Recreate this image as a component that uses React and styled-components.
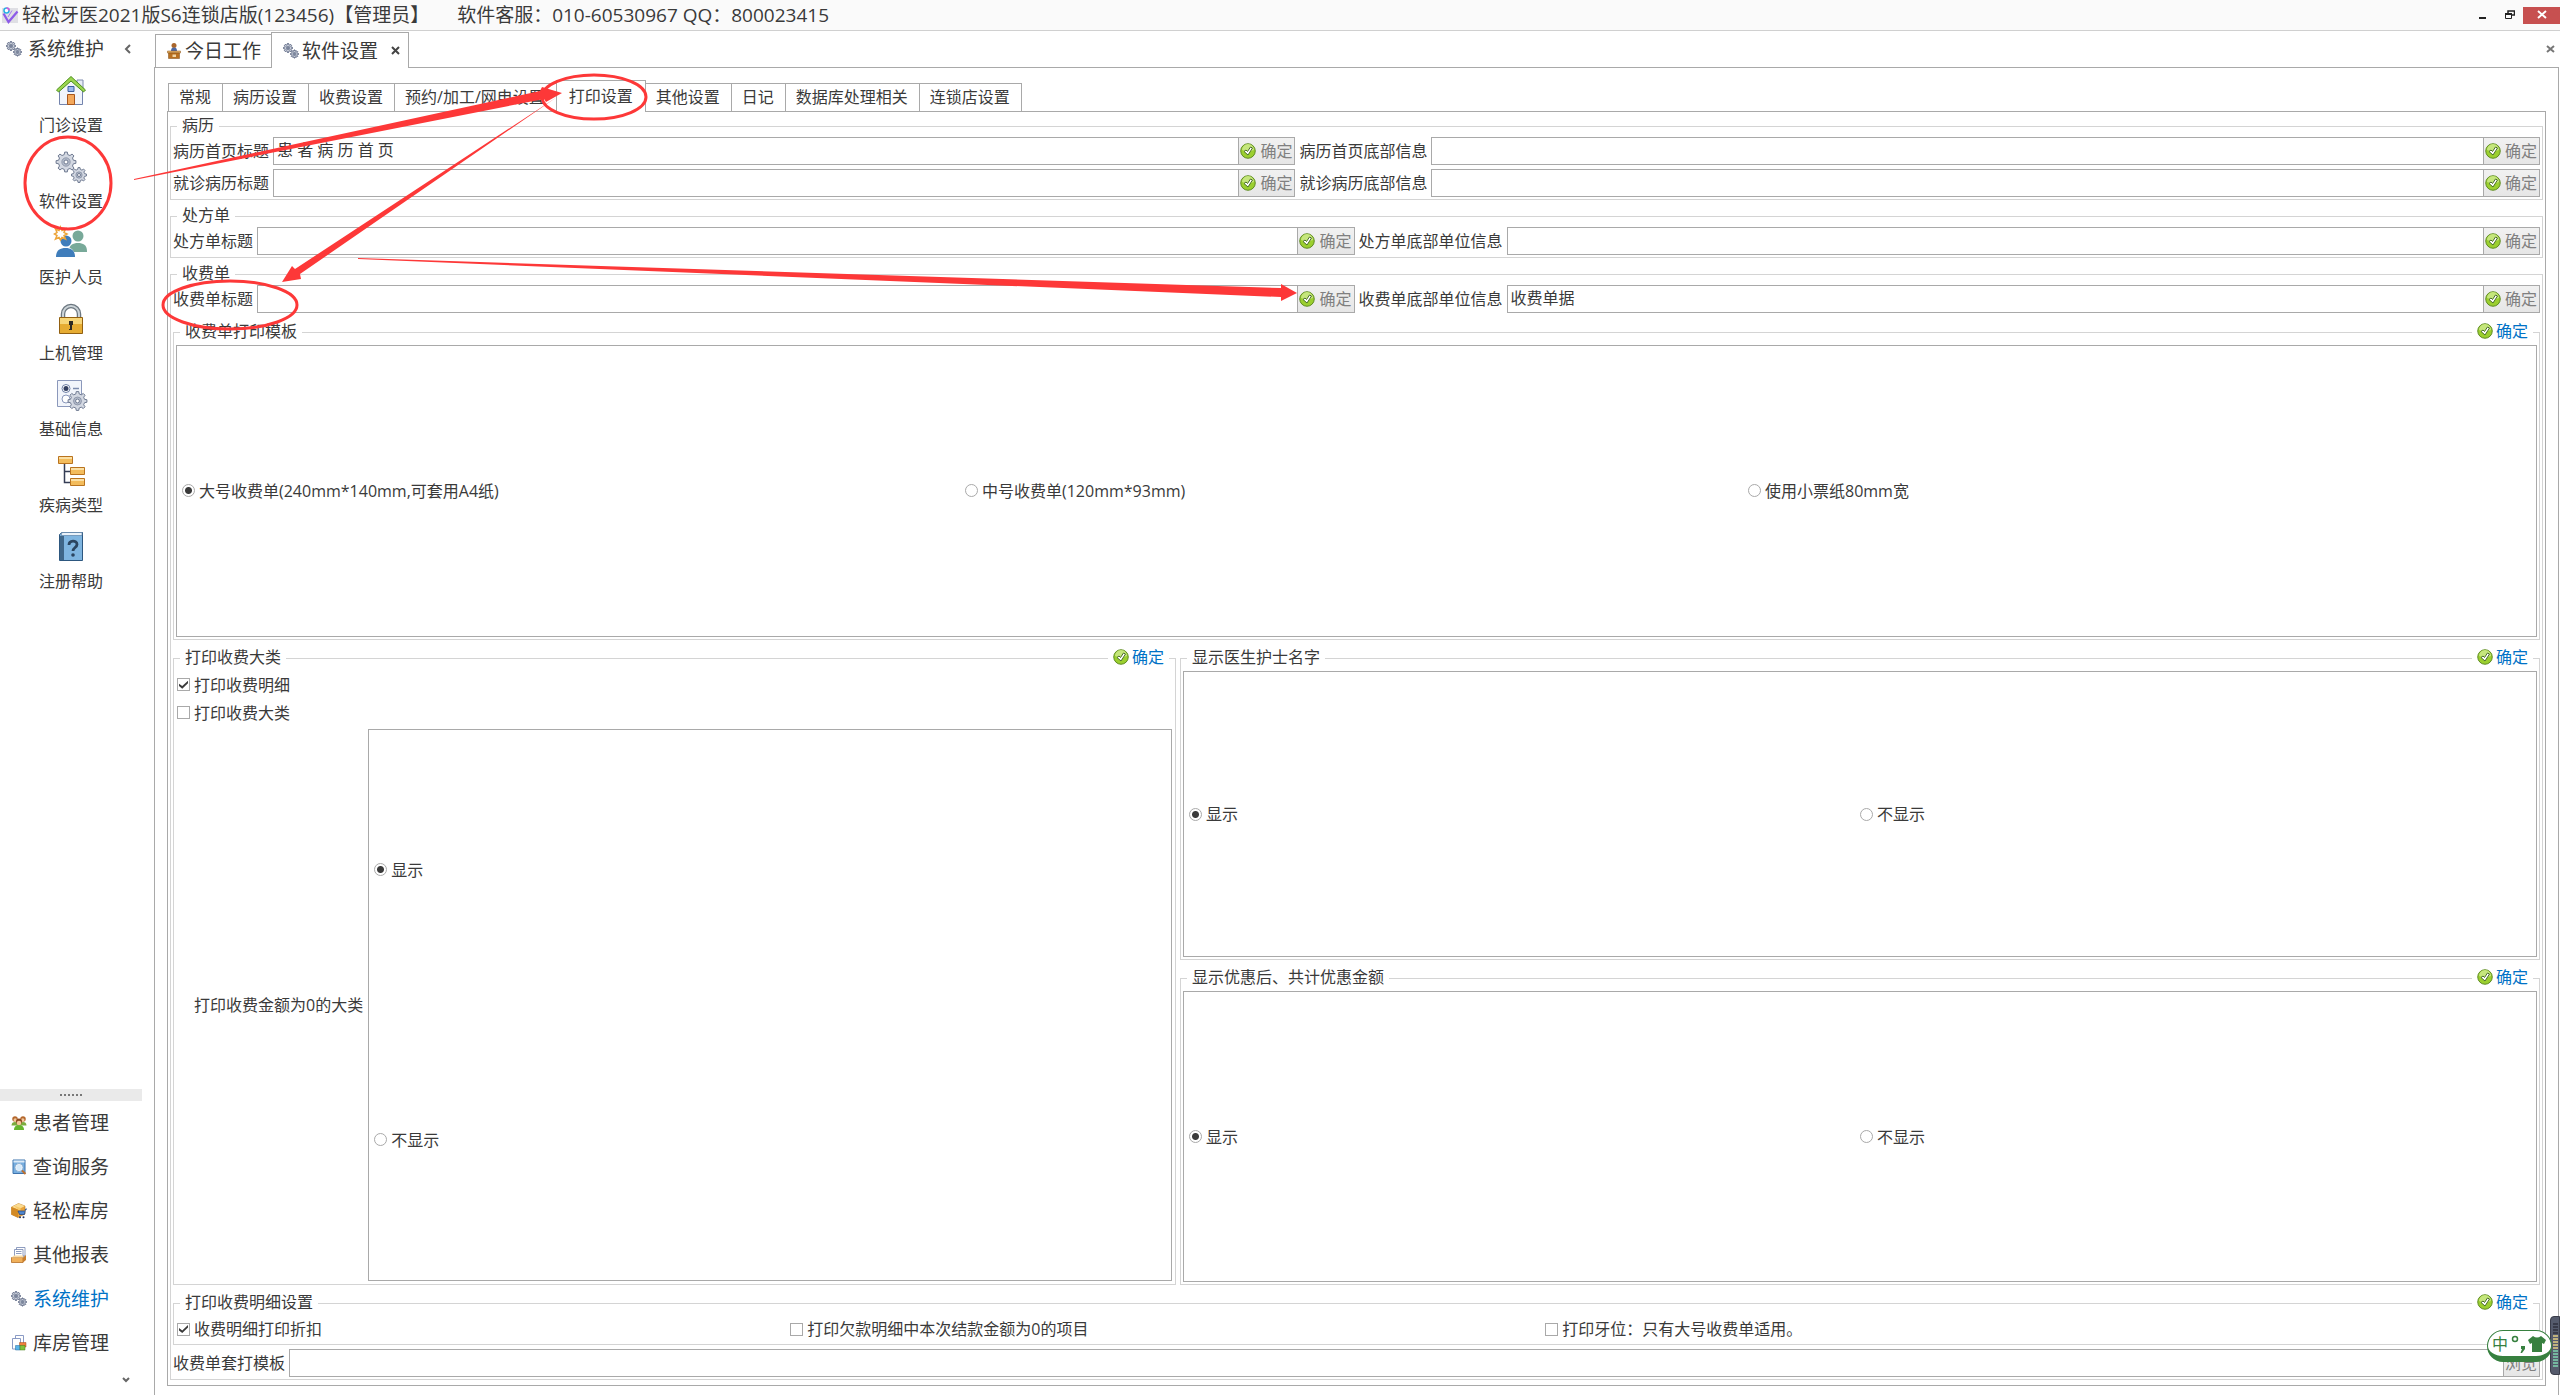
import React, { useState } from 'react';
import styled, { createGlobalStyle, css } from 'styled-components';

const LINE = '#a9a9a9';
const SOFT_LINE = '#d4d4d4';
const TEXT = '#3a3a3a';
const BLUE = '#0072c6';
const RED = '#fd3838';

const NAV_ITEMS = [
  { name: '门诊设置', icon: 'house' },
  { name: '软件设置', icon: 'gears' },
  { name: '医护人员', icon: 'people' },
  { name: '上机管理', icon: 'lock' },
  { name: '基础信息', icon: 'form' },
  { name: '疾病类型', icon: 'tree' },
  { name: '注册帮助', icon: 'book' },
];

const MODULES = [
  { name: '患者管理', icon: 'patients' },
  { name: '查询服务', icon: 'search' },
  { name: '轻松库房', icon: 'box' },
  { name: '其他报表', icon: 'report' },
  { name: '系统维护', icon: 'smallGears' },
  { name: '库房管理', icon: 'store' },
];

const SETTING_TABS = [
  '常规',
  '病历设置',
  '收费设置',
  '预约/加工/网电设置',
  '打印设置',
  '其他设置',
  '日记',
  '数据库处理相关',
  '连锁店设置',
];

const gearPath = (cx, cy, r, teeth = 8) => {
  const points = [];
  const step = (Math.PI * 2) / teeth;
  for (let i = 0; i < teeth; i++) {
    [
      [-0.3, 0.76],
      [-0.17, 1],
      [0.17, 1],
      [0.3, 0.76],
    ].forEach(([offset, scale]) => {
      const a = (i + offset) * step;
      points.push(
        `${(cx + Math.cos(a) * r * scale).toFixed(2)} ${(cy + Math.sin(a) * r * scale).toFixed(2)}`
      );
    });
  }
  return `M${points.join('L')}Z`;
};

const Gear = ({ cx, cy, r, stroke = '#707b92', width = 1 }) => (
  <g stroke={stroke} strokeWidth={width}>
    <path d={gearPath(cx, cy, r)} fill="#d3d8e2" />
    <circle cx={cx} cy={cy} r={r * 0.42} fill="#b4bccb" strokeWidth={width * 0.6} />
    <circle cx={cx} cy={cy} r={r * 0.2} fill="#fff" />
  </g>
);

const ICONS = {
  house: (
    <>
      <path d="M22 5h6v12h-6z" fill="#e8ecf5" stroke="#7e8cae" />
      <path d="M4.500 15 16 4l11.500 11v14.500h-23z" fill="#f1f4fb" stroke="#7384ad" />
      <path d="M1.500 15 16 1.500 30.500 15l-2 2L16 6 3.500 17z" fill="#9bd650" stroke="#4c8f1c" />
      <path d="M13 11.500h6v5h-6z" fill="#9ab9ee" stroke="#3d5f9f" />
      <path d="M12.500 19.500h7v10h-7z" fill="#f3a85c" stroke="#a8561c" />
    </>
  ),
  gears: (
    <>
      <Gear cx={11} cy={11} r={10} />
      <Gear cx={24} cy={24} r={7.500} />
    </>
  ),
  smallGears: (
    <>
      <Gear cx={10} cy={10} r={9} stroke="#5b6682" width={2} />
      <Gear cx={23} cy={22} r={8} stroke="#5b6682" width={2} />
    </>
  ),
  people: (
    <>
      <circle cx="23" cy="9" r="5.500" fill="#78a999" />
      <path d="M14 24c0-6 4-8 9-8s9 2 9 8v1H18z" fill="#78a999" />
      <circle cx="11" cy="14" r="6" fill="#fff" />
      <path d="M0 31c0-8 4-11 10-11s10 3 10 11z" fill="#fff" />
      <circle cx="11" cy="14" r="5.500" fill="#3f7dbb" />
      <path d="M1 30c0-7 4-9 9.500-9S20 23 20 30z" fill="#3f7dbb" />
      <path
        d="M5.500 0 7 3.500 10.500 2 9 5.500l3 1.500-3 1.500 1.500 3.500L7 10.500 5.500 13 4 10.500.500 12 2 8.500-.500 7 2 5.500.500 2 4 3.500z"
        fill="#fff"
        stroke="#eda53a"
        strokeWidth="1.500"
      />
    </>
  ),
  lock: (
    <>
      <path d="M8 15v-4a8 8 0 0 1 16 0v4" fill="none" stroke="#6c7780" strokeWidth="4.500" />
      <path d="M8 15v-4a8 8 0 0 1 16 0v4" fill="none" stroke="#ccd4d8" strokeWidth="2" />
      <path d="M4.500 14.500h23v16h-23z" fill="#e6ac32" stroke="#926011" />
      <path d="M5 15h22v6H5z" fill="#f7d678" />
      <path d="M14 18h4v4h-1v5h-3v-1h1v-4h-1z" fill="#2c2923" />
    </>
  ),
  form: (
    <>
      <path d="M2.500 1.500h24v26h-24z" fill="#f2f5fb" stroke="#8b98bb" />
      <circle cx="11" cy="9.500" r="4" fill="#fff" stroke="#6e7fa5" />
      <circle cx="11" cy="9.500" r="2.500" fill="#333f60" />
      <circle cx="11" cy="20" r="4" fill="#fff" stroke="#8b98bb" />
      <path d="M18 9.500h6" stroke="#7d8cae" strokeWidth="1.500" />
      <Gear cx={22.500} cy={22} r={9.500} />
    </>
  ),
  tree: (
    <>
      <path d="M9.500 9v18.500h6M9.500 16.500h6" fill="none" stroke="#353d55" strokeWidth="1.500" />
      <g fill="#f3bc5c" stroke="#b9731e">
        <path d="M3.500 1.500h14v7h-14zM15.500 12.500h14v7h-14zM15.500 23.500h14v7h-14z" />
      </g>
      <path d="M4 3h13M16 14h13M16 25h13" stroke="#fbe0a4" strokeWidth="2" />
    </>
  ),
  book: (
    <>
      <path d="M4.500 3.500 7 1.500h20.500v28h-23z" fill="#7fb5e0" stroke="#2d577f" />
      <path d="M7 1.500h20v3H6z" fill="#eaf2f9" stroke="#5b83a8" strokeWidth="0.700" />
      <path d="M5 5h4v24H5z" fill="#3f6688" />
      <path
        d="M14 14c0-5 8-5 8-.500 0 3-4 3-4 6.500"
        fill="none"
        stroke="#2b4560"
        strokeWidth="2.800"
      />
      <circle cx="18" cy="24" r="1.800" fill="#2b4560" />
    </>
  ),
  patients: (
    <>
      <path d="M1 21c0-5 3-7 7-7s7 2 7 7zM17 21c0-5 3-7 7-7s7 2 7 7z" fill="#7cab3e" />
      <circle cx="8" cy="8" r="5.500" fill="#b5682d" />
      <circle cx="24" cy="8" r="5.500" fill="#b5682d" />
      <circle cx="8.500" cy="10" r="3.500" fill="#f3c79b" />
      <circle cx="23.500" cy="10" r="3.500" fill="#f3c79b" />
      <path d="M6 30c0-7 4-10 10-10s10 3 10 10z" fill="#66b52e" />
      <circle cx="16" cy="13" r="6" fill="#8f4c20" />
      <circle cx="16" cy="16" r="4.500" fill="#f3c79b" />
    </>
  ),
  search: (
    <>
      <path d="M4 2h24v27H4z" fill="#76aee0" stroke="#3f74ad" strokeWidth="2" />
      <path d="M5 3h22v4H5z" fill="#dceaf7" />
      <circle cx="16" cy="17" r="7" fill="#d6eafa" stroke="#f7fbff" strokeWidth="3" />
      <circle cx="16" cy="17" r="8" fill="none" stroke="#4376a8" />
      <path d="m22 23 7 7" stroke="#bd7030" strokeWidth="4" />
    </>
  ),
  box: (
    <>
      <path d="m1 8 14-7 13 5v16l-14 7L1 23z" fill="#e9a33b" stroke="#a86a17" />
      <path d="m1 8 14-7 13 5-14 7z" fill="#fbdb91" />
      <path d="M14 13v16L1 23V8z" fill="#d38a24" />
      <path d="m6 5 13 5v5l-4-1" fill="#f7c968" />
      <path d="M32 12h-3l-2 11H17l-3-7h13" fill="#4d86cf" stroke="#27457f" strokeWidth="1.500" />
      <circle cx="18" cy="28.500" r="2" fill="#27345c" />
      <circle cx="25" cy="28.500" r="2" fill="#27345c" />
    </>
  ),
  report: (
    <>
      <path d="M11 1h17v17H11z" fill="#fff" stroke="#6b7dab" strokeWidth="1.500" />
      <path d="M7 5h17v15H7z" fill="#fff" stroke="#6b7dab" strokeWidth="1.500" />
      <path d="M10 9h11M10 13h11" stroke="#6b7dab" strokeWidth="1.500" />
      <path d="M1 21h23v10H1z" fill="#f0b05a" stroke="#b06820" strokeWidth="1.500" />
      <path d="m24 21 6-5v10l-6 5z" fill="#c9802f" />
      <path d="m1 21 5-4h18v4z" fill="#fbdca4" />
    </>
  ),
  store: (
    <>
      <path d="M9 1h16v20H9z" fill="#fff" stroke="#7e90be" strokeWidth="1.800" />
      <path d="M3 7h16v21H3z" fill="#fff" stroke="#7e90be" strokeWidth="1.800" />
      <path d="M17 15h13v9H17z" fill="#ee7f3d" stroke="#a94818" />
      <path d="M9 21h9v9H9z" fill="#59b4ea" stroke="#23699c" />
      <path d="M18 21h10v9H18z" fill="#7fc13c" stroke="#477d18" />
    </>
  ),
  desk: (
    <>
      <circle cx="16" cy="5" r="5" fill="#a9652a" />
      <path d="M10 16c0-5 2-7 6-7s6 2 6 7z" fill="#4b68a5" />
      <path d="M3 16h26v4H3z" fill="#e8b468" stroke="#8d551a" />
      <path d="M5 20h22v11H5z" fill="#b9701f" stroke="#7f4a10" />
      <path d="M13 23h7v5h-7z" fill="#f0d6a6" />
    </>
  ),
  logo: (
    <>
      <path d="M0 2h32v30H0z" fill="#dfdfe4" />
      <path d="M3 13 13 30 31 9" fill="none" stroke="#8d5be8" strokeWidth="4.500" />
      <path d="M12 20 20 7" fill="none" stroke="#a77df0" strokeWidth="2" />
      <circle cx="9" cy="7" r="5" fill="#fff" stroke="#28b3e4" strokeWidth="3" />
      <path d="M9 2a5 5 0 0 1 5 5" fill="none" stroke="#d656d8" strokeWidth="3" />
    </>
  ),
  confirm: (
    <>
      <circle cx="16" cy="16" r="14.500" fill="#9bcf2f" stroke="#5f8c22" strokeWidth="2" />
      <path d="M4 14a12 12 0 0 1 24 0q-12 5-24 0z" fill="#c5e67c" />
      <path d="m8 17 4-3 3 3 6-9 4 2-9 14z" fill="#fff" stroke="#4a6e2a" strokeWidth="2" />
    </>
  ),
};

const Icon = ({ name, size = 16 }) => (
  <IconSvg viewBox="0 0 32 32" width={size} height={size} aria-hidden="true">
    {ICONS[name]}
  </IconSvg>
);

const Field = ({ id, label, value = '', action = '确定', plain }) => (
  <FieldWrap>
    <label htmlFor={id}>{label}</label>
    <FieldBox>
      <Input id={id} defaultValue={value} />
      <FieldButton type="button">
        {!plain && <Icon name="confirm" />}
        {action}
      </FieldButton>
    </FieldBox>
  </FieldWrap>
);

const Group = ({ title, confirm, grow, nested, children }) => (
  <Fieldset $grow={grow} $nested={nested}>
    <legend>{title}</legend>
    {confirm && (
      <ConfirmButton type="button">
        <Icon name="confirm" />
        确定
      </ConfirmButton>
    )}
    {children}
  </Fieldset>
);

const Radios = ({ name, options, column }) => {
  const [picked, setPicked] = useState(0);

  return (
    <RadioBox $column={column}>
      {options.map((option, i) => (
        <Choice key={option}>
          <Radio type="radio" name={name} checked={picked === i} onChange={() => setPicked(i)} />
          {option}
        </Choice>
      ))}
    </RadioBox>
  );
};

const Check = ({ label, checked }) => (
  <Choice>
    <Checkbox type="checkbox" defaultChecked={checked} />
    {label}
  </Choice>
);

const Marks = () => (
  <MarksSvg viewBox="0 0 2560 1395" preserveAspectRatio="none" aria-hidden="true">
    <g fill="none" stroke={RED} strokeWidth="3">
      <ellipse cx="68" cy="183" rx="43" ry="46" />
      <ellipse cx="594" cy="97" rx="52" ry="22" />
      <ellipse cx="230" cy="305" rx="67" ry="24" />
    </g>
    <g fill={RED}>
      <path d="M134 179 540 91l2-4 20 6-16 9-2-3L134 180z" />
      <path d="M557 97 295 269l-3-3-10 16 19-3-1-5z" />
      <path d="M358 258 1281 288v-4l16 9-16 8v-4L358 259z" />
    </g>
  </MarksSvg>
);

const App = () => {
  const [activeTab, setActiveTab] = useState('打印设置');

  return (
    <Window>
      <GlobalStyle />
      <TitleBar>
        <Icon name="logo" />
        <TitleText>轻松牙医2021版S6连锁店版(123456)【管理员】</TitleText>
        <span>软件客服：010-60530967 QQ：800023415</span>
        <WindowButtons>
          <WindowButton type="button" aria-label="最小化">
            <svg width="10" height="10">
              <path d="M1 7h7v2H1z" fill="#222" />
            </svg>
          </WindowButton>
          <WindowButton type="button" aria-label="还原">
            <svg width="10" height="10" fill="none" stroke="#222">
              <path d="M3 3V1h6.500v4H7" strokeWidth="1.500" />
              <path d="M.500 4.500h6v4h-6z" />
              <path d="M0 4h7" strokeWidth="2" />
            </svg>
          </WindowButton>
          <WindowButton type="button" aria-label="关闭" $close>
            <svg width="10" height="10">
              <path d="m1 1 8 7M9 1 1 8" stroke="#fff" strokeWidth="2" />
            </svg>
          </WindowButton>
        </WindowButtons>
      </TitleBar>

      <Body>
        <Sidebar>
          <SidebarHeader>
            <Icon name="smallGears" />
            系统维护
            <Collapse type="button" aria-label="收起">
              <svg width="8" height="10">
                <path d="M6 1 2 5l4 4" fill="none" stroke="#666" strokeWidth="2" />
              </svg>
            </Collapse>
          </SidebarHeader>
          <NavList>
            {NAV_ITEMS.map((item) => (
              <NavButton type="button" key={item.name}>
                <Icon name={item.icon} size={32} />
                {item.name}
              </NavButton>
            ))}
          </NavList>
          <Splitter>
            <svg width="24" height="2">
              <path d="M1 1h22" stroke="#777" strokeWidth="2" strokeDasharray="2 2" />
            </svg>
          </Splitter>
          <ModuleList>
            {MODULES.map((item) => (
              <ModuleButton type="button" key={item.name} $active={item.name === '系统维护'}>
                <Icon name={item.icon} />
                {item.name}
              </ModuleButton>
            ))}
          </ModuleList>
          <More type="button" aria-label="更多">
            <svg width="8" height="8">
              <path d="M1 2l3 3 3-3" fill="none" stroke="#666" strokeWidth="2" />
            </svg>
          </More>
        </Sidebar>

        <Main>
          <DocTabs>
            <DocTab type="button">
              <Icon name="desk" />
              今日工作
            </DocTab>
            <DocTab type="button" $active>
              <Icon name="smallGears" />
              软件设置
              <CloseMark width="9" height="9">
                <path d="m1 1 7 7M8 1 1 8" stroke="#444" strokeWidth="2" />
              </CloseMark>
            </DocTab>
            <CloseAll type="button" aria-label="关闭页面">
              <svg width="9" height="8">
                <path d="m1 1 7 6M8 1 1 7" stroke="#777" strokeWidth="2" />
              </svg>
            </CloseAll>
          </DocTabs>

          <DocPanel>
            <SettingTabs>
              {SETTING_TABS.map((tab) => (
                <SettingTab
                  type="button"
                  key={tab}
                  $active={tab === activeTab}
                  onClick={() => setActiveTab(tab)}
                >
                  {tab}
                </SettingTab>
              ))}
            </SettingTabs>

            <Settings>
              <Group title="病历">
                <FieldRow $columns="19fr 21fr">
                  <Field id="record-title" label="病历首页标题" value="患 者 病 历 首 页" />
                  <Field id="record-footer" label="病历首页底部信息" />
                  <Field id="visit-title" label="就诊病历标题" />
                  <Field id="visit-footer" label="就诊病历底部信息" />
                </FieldRow>
              </Group>

              <Group title="处方单">
                <FieldRow $columns="1fr 1fr">
                  <Field id="recipe-title" label="处方单标题" />
                  <Field id="recipe-footer" label="处方单底部单位信息" />
                </FieldRow>
              </Group>

              <Group title="收费单" grow={1}>
                <FieldRow $columns="1fr 1fr">
                  <Field id="bill-title" label="收费单标题" />
                  <Field id="bill-footer" label="收费单底部单位信息" value="收费单据" />
                </FieldRow>

                <BillSettings>
                  <Group title="收费单打印模板" confirm nested grow={312}>
                    <Radios
                      name="template"
                      options={[
                        '大号收费单(240mm*140mm,可套用A4纸)',
                        '中号收费单(120mm*93mm)',
                        '使用小票纸80mm宽',
                      ]}
                    />
                  </Group>

                  <Split>
                    <Group title="打印收费大类" confirm nested grow={1}>
                      <CheckStack>
                        <Check label="打印收费明细" checked />
                        <Check label="打印收费大类" />
                      </CheckStack>
                      <ZeroRow>
                        打印收费金额为0的大类
                        <Radios name="zero" options={['显示', '不显示']} column />
                      </ZeroRow>
                    </Group>
                    <SplitColumn>
                      <Group title="显示医生护士名字" confirm nested grow={78}>
                        <Radios name="doctor" options={['显示', '不显示']} />
                      </Group>
                      <Group title="显示优惠后、共计优惠金额" confirm nested grow={79}>
                        <Radios name="discount" options={['显示', '不显示']} />
                      </Group>
                    </SplitColumn>
                  </Split>

                  <Group title="打印收费明细设置" confirm nested>
                    <DetailRow>
                      <Check label="收费明细打印折扣" checked />
                      <Check label="打印欠款明细中本次结款金额为0的项目" />
                      <Check label="打印牙位：只有大号收费单适用。" />
                    </DetailRow>
                  </Group>
                </BillSettings>

                <FieldRow $columns="1fr">
                  <Field id="overlay" label="收费单套打模板" action="浏览" plain />
                </FieldRow>
              </Group>
            </Settings>
          </DocPanel>
        </Main>
      </Body>

      <Marks />
      <Meter>
        <svg width="5" height="46">
          <path d="M0 1h5M0 4h5M0 7h5M0 10h5" stroke="#2f323e" strokeWidth="1.500" />
          <path d="M0 13h5M0 16h5M0 19h5M0 22h5M0 25h5" stroke="#e3d083" strokeWidth="1.500" />
          <path d="M0 28h5M0 31h5M0 34h5M0 37h5M0 40h5M0 43h5" stroke="#7fd6b0" strokeWidth="1.500" />
        </svg>
      </Meter>
      <ImeBar>
        <span>中</span>
        <svg width="14" height="18" viewBox="0 0 14 18">
          <circle cx="4" cy="4" r="2.500" fill="none" stroke="#37803f" strokeWidth="1.500" />
          <path d="M10 11h4v3l-3 4h-1.500l1.500-4h-1z" fill="#37803f" />
        </svg>
        <svg width="18" height="16" viewBox="0 0 18 16">
          <path d="M5 0q4 3 8 0l5 4-2 4-2-1v9H4V7L2 8 0 4z" fill="#37803f" />
        </svg>
      </ImeBar>
    </Window>
  );
};

export default App;

const GlobalStyle = createGlobalStyle`
  *, *::before, *::after {
    box-sizing: border-box;
  }
  body {
    margin: 0;
    background: #ffffff;
    color: ${TEXT};
    font: 16px/20px 'Open Sans', 'Noto Sans CJK SC', sans-serif;
  }
  button, input {
    margin: 0;
    padding: 0;
    border: 0;
    background: none;
    color: inherit;
    font: inherit;
    white-space: nowrap;
  }
  label {
    white-space: nowrap;
  }
`;

const IconSvg = styled.svg`
  flex: none;
  overflow: visible;
`;

const Window = styled.div`
  position: relative;
  display: flex;
  flex-direction: column;
  min-height: 100vh;
  overflow: hidden;
`;

const TitleBar = styled.header`
  display: flex;
  align-items: center;
  height: 31px;
  padding-left: 2px;
  gap: 4px;
  background: #fafafa;
  border-bottom: 1px solid #d0d0d0;
  font-size: 19px;
  white-space: nowrap;
`;

const TitleText = styled.span`
  margin-right: 24px;
`;

const WindowButtons = styled.div`
  display: flex;
  margin-left: auto;
`;

const WindowButton = styled.button`
  display: flex;
  align-items: center;
  justify-content: center;
  width: ${({ $close }) => ($close ? 37 : 27)}px;
  height: 17px;
  background: ${({ $close }) => ($close ? '#c75050' : 'none')};
`;

const Body = styled.div`
  flex: 1;
  display: flex;
`;

const Sidebar = styled.aside`
  flex: none;
  display: flex;
  flex-direction: column;
  width: 142px;
`;

const SidebarHeader = styled.div`
  display: flex;
  align-items: center;
  height: 36px;
  padding-left: 6px;
  gap: 6px;
  font-size: 19px;
`;

const Collapse = styled.button`
  display: flex;
  margin-left: 14px;
`;

const NavList = styled.nav`
  flex: 1;
  display: flex;
  flex-direction: column;
  padding-top: 8px;
`;

const NavButton = styled.button`
  display: flex;
  flex-direction: column;
  align-items: center;
  height: 76px;
  gap: 8px;
`;

const Splitter = styled.div`
  display: flex;
  align-items: center;
  justify-content: center;
  height: 12px;
  background: #eaeaea;
`;

const ModuleList = styled.nav`
  display: flex;
  flex-direction: column;
`;

const ModuleButton = styled.button`
  display: flex;
  align-items: center;
  height: 44px;
  padding-left: 11px;
  gap: 6px;
  font-size: 19px;
  color: ${({ $active }) => ($active ? BLUE : TEXT)};
`;

const More = styled.button`
  display: flex;
  align-items: center;
  align-self: flex-end;
  height: 30px;
  margin-right: 12px;
`;

const Main = styled.main`
  flex: 1;
  display: flex;
  flex-direction: column;
  min-width: 0;
  padding: 0 1px 0 12px;
`;

const DocTabs = styled.div`
  display: flex;
  align-items: flex-end;
  height: 36px;
  padding-left: 1px;
`;

const DocTab = styled.button`
  display: flex;
  align-items: center;
  height: 33px;
  padding: 0 10px;
  gap: 3px;
  border: 1px solid ${LINE};
  border-width: 1px 0 0 1px;
  font-size: 19px;

  ${({ $active }) =>
    $active &&
    css`
      position: relative;
      height: 36px;
      margin-bottom: -1px;
      padding: 0 8px 0 11px;
      border-width: 1px 1px 0;
      background: #ffffff;
    `}
`;

const CloseMark = styled.svg`
  margin-left: 10px;
`;

const CloseAll = styled.button`
  display: flex;
  align-self: center;
  margin: 0 4px 0 auto;
`;

const DocPanel = styled.section`
  flex: 1;
  display: flex;
  flex-direction: column;
  padding: 12px 12px 9px;
  border: 1px solid ${LINE};
  border-bottom: 0;
`;

const SettingTabs = styled.div`
  display: flex;
  align-items: flex-end;
  height: 31px;
  padding-left: 1px;
`;

const SettingTab = styled.button`
  height: 28px;
  padding: 0 11px 2px 10px;
  margin-right: -1px;
  border: 1px solid ${LINE};
  border-bottom: 0;

  ${({ $active }) =>
    $active &&
    css`
      position: relative;
      height: 32px;
      margin-bottom: -1px;
      padding: 0 12px 2px;
      background: #ffffff;
    `}
`;

const Settings = styled.form`
  flex: 1;
  display: flex;
  flex-direction: column;
  gap: 6px;
  padding: 4px 2px 5px;
  border: 1px solid ${LINE};
`;

const Fieldset = styled.fieldset`
  position: relative;
  display: flex;
  flex-direction: column;
  flex: ${({ $grow }) => ($grow ? `${$grow} 1 0` : 'none')};
  min-width: 0;
  margin: 0;
  padding: ${({ $nested }) => ($nested ? '2px' : '0 2px 2px')};
  border: 1px solid ${SOFT_LINE};

  > legend {
    height: 21px;
    margin-left: 4px;
    padding: 0 5px;
    line-height: 18px;
  }
`;

/* sits on the top border of the fieldset */
const ConfirmButton = styled.button`
  position: absolute;
  top: -22px;
  right: 6px;
  display: flex;
  align-items: center;
  height: 20px;
  padding: 0 5px;
  gap: 3px;
  background: #ffffff;
  color: ${BLUE};
`;

const FieldRow = styled.div`
  display: grid;
  grid-template-columns: ${({ $columns }) => $columns};
  gap: 4px;
`;

const FieldWrap = styled.div`
  display: flex;
  align-items: center;
  gap: 4px;
  min-width: 0;
`;

const FieldBox = styled.div`
  flex: 1;
  display: flex;
  min-width: 0;
  height: 28px;
  border: 1px solid ${LINE};
`;

const Input = styled.input`
  flex: 1;
  min-width: 0;
  padding: 0 3px 2px;
`;

const FieldButton = styled.button`
  display: flex;
  align-items: center;
  padding: 0 2px 0 1px;
  gap: 4px;
  border-left: 1px solid ${LINE};
  background: linear-gradient(#f1f1f1, #e6e6e6);
  color: #808080;
`;

const BillSettings = styled.div`
  flex: 1;
  display: flex;
  flex-direction: column;
  gap: 8px;
  padding: 9px 0 4px;
`;

const Split = styled.div`
  flex: 638 1 0;
  display: grid;
  grid-template-columns: 59fr 80fr;
  gap: 4px;

  > fieldset {
    height: 100%;
  }
`;

const SplitColumn = styled.div`
  display: flex;
  flex-direction: column;
  gap: 8px;
`;

const RadioBox = styled.div`
  flex: 1;
  display: flex;
  flex-direction: ${({ $column }) => ($column ? 'column' : 'row')};
  min-height: 80px;
  padding: 5px;
  border: 1px solid ${LINE};

  > label {
    flex: 1;
  }
`;

const Choice = styled.label`
  display: flex;
  align-items: center;
  gap: 4px;
`;

const Radio = styled.input`
  appearance: none;
  flex: none;
  width: 13px;
  height: 13px;
  border: 1px solid ${LINE};
  border-radius: 50%;
  background: #ffffff;

  &:checked {
    background: radial-gradient(circle, #3a3a3a 3px, #ffffff 4px);
  }
`;

const Checkbox = styled.input`
  appearance: none;
  flex: none;
  display: grid;
  place-items: center;
  width: 13px;
  height: 13px;
  border: 1px solid ${LINE};
  background: #ffffff;

  &:checked::after {
    content: '';
    width: 9px;
    height: 8px;
    background: ${TEXT};
    clip-path: polygon(0 38%, 36% 68%, 100% 0, 100% 32%, 36% 100%, 0 68%);
  }
`;

const CheckStack = styled.div`
  display: grid;
  grid-auto-rows: 28px;
  padding: 0 1px 2px;
`;

const ZeroRow = styled.div`
  flex: 1;
  display: flex;
  align-items: center;
  gap: 5px;
  padding: 0 1px 1px 18px;
  white-space: nowrap;

  > div {
    align-self: stretch;
  }
`;

const DetailRow = styled.div`
  display: grid;
  grid-template-columns: 26fr 32fr 42fr;
  height: 26px;
  padding: 0 1px;
`;

/* red hand-drawn hints that lie over the window */
const MarksSvg = styled.svg`
  position: absolute;
  inset: 0;
  width: 100%;
  height: 100%;
  pointer-events: none;
`;

const Meter = styled.div`
  position: absolute;
  right: 0;
  bottom: 20px;
  display: flex;
  align-items: center;
  justify-content: center;
  width: 10px;
  height: 59px;
  border: 1px solid #3a3d4a;
  border-radius: 4px 0 0 4px;
  background: #555b6c;
`;

const ImeBar = styled.div`
  position: absolute;
  right: 8px;
  bottom: 33px;
  display: flex;
  align-items: center;
  width: 65px;
  height: 32px;
  padding: 0 4px;
  gap: 3px;
  border: 1px solid #37803f;
  border-bottom-width: 6px;
  border-radius: 16px;
  background: #ffffff;
  color: #37803f;
`;
